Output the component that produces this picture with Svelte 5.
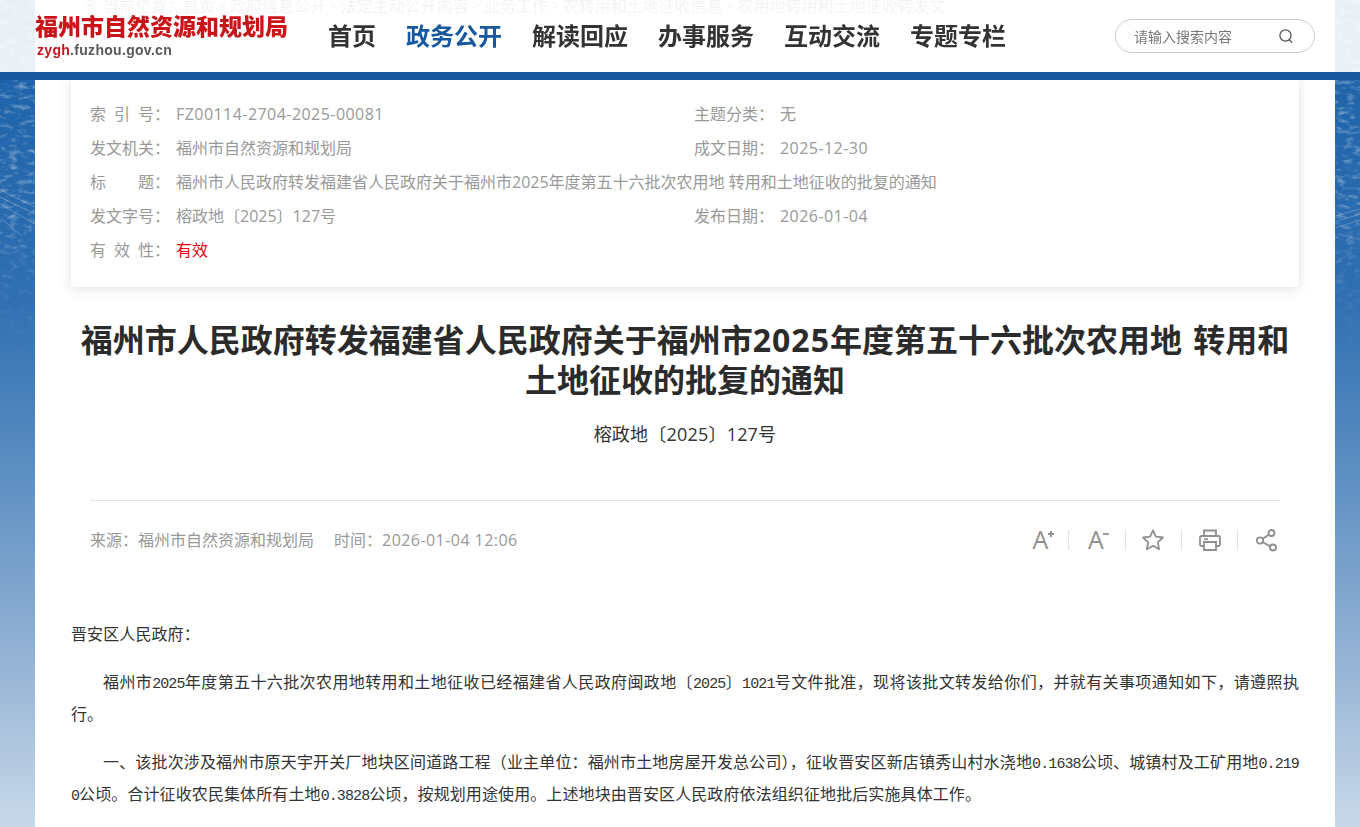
<script>
  const nav = ["首页", "政务公开", "解读回应", "办事服务", "互动交流", "专题专栏"];
  const crumbs = ["首页", "政府信息公开", "法定主动公开内容", "业务工作", "农转用和土地征收信息", "农用地转用和土地征收转发文"];
  const title = "福州市人民政府转发福建省人民政府关于福州市2025年度第五十六批次农用地 转用和土地征收的批复的通知";
</script>

<div class="root">
  <svg class="texture" width="1360" height="827" aria-hidden="true">
    <defs>
      <linearGradient id="fade" x1="0" y1="0" x2="0" y2="1">
        <stop offset="0" stop-color="#fff" stop-opacity="1" />
        <stop offset="0.24" stop-color="#fff" stop-opacity="0.9" />
        <stop offset="0.34" stop-color="#fff" stop-opacity="0.3" />
        <stop offset="0.44" stop-color="#fff" stop-opacity="0" />
      </linearGradient>
      <mask id="fademask">
        <rect width="1360" height="827" fill="url(#fade)" />
      </mask>
      <filter id="grain" x="0" y="0" width="100%" height="100%">
        <feTurbulence type="fractalNoise" baseFrequency="0.11 0.2" numOctaves="3" seed="11" />
        <feColorMatrix values="0 0 0 0 1  0 0 0 0 1  0 0 0 0 1  2.4 0 0 0 -1.18" />
      </filter>
    </defs>
    <g mask="url(#fademask)">
      <g opacity="0.42">
        <rect x="0" y="0" width="36" height="827" filter="url(#grain)" />
        <rect x="1334" y="0" width="26" height="827" filter="url(#grain)" />
      </g>
      <g class="lines">
        <path d="M0 190 L35 207 M0 197 L35 214 M0 204 L35 224 M3 220 L22 236" />
        <path d="M1335 228 L1360 220 M1335 222 L1360 214 M1335 216 L1360 209 M1338 234 L1360 240" />
      </g>
    </g>
  </svg>

  <header class="top">
    <div class="top-inner">
      <div class="logo">
        <div class="logo-cn">福州市自然资源和规划局</div>
        <div class="logo-en"><span>zygh</span>.fuzhou.gov.cn</div>
      </div>
      <nav>
        {#each nav as item, i}
          <a href="#top" class:active={i === 1}>{item}</a>
        {/each}
      </nav>
      <div class="search">
        <span>请输入搜索内容</span>
        <svg width="16" height="16" viewBox="0 0 16 16" fill="none" stroke="#555" stroke-width="1.3">
          <circle cx="7.5" cy="7.5" r="5.6" />
          <path d="M11.3 11.6 L13.6 14.2" stroke-linecap="round" />
        </svg>
      </div>
    </div>
  </header>

  <main class="page">
    <div class="crumbs">
      <svg width="14" height="14" viewBox="0 0 14 14" fill="none" stroke="#888" stroke-width="1.2">
        <circle cx="7" cy="6" r="4.5" />
        <circle cx="7" cy="6" r="1.4" />
      </svg>
      <span>当前位置：</span>
      {#each crumbs as c, i}
        {#if i > 0}<i>&gt;</i>{/if}<span>{c}</span>
      {/each}
    </div>

    <section class="card">
      <div class="row">
        <div class="cell"><span class="label">索引号</span><b>：</b><span class="num">FZ00114-2704-2025-00081</span></div>
        <div class="cell"><span class="label plain">主题分类</span><b>：</b><span>无</span></div>
      </div>
      <div class="row">
        <div class="cell"><span class="label">发文机关</span><b>：</b><span>福州市自然资源和规划局</span></div>
        <div class="cell"><span class="label plain">成文日期</span><b>：</b><span class="num">2025-12-30</span></div>
      </div>
      <div class="row">
        <div class="cell"><span class="label">标题</span><b>：</b><span>{title}</span></div>
      </div>
      <div class="row">
        <div class="cell"><span class="label">发文字号</span><b>：</b><span>榕政地〔2025〕127号</span></div>
        <div class="cell"><span class="label plain">发布日期</span><b>：</b><span class="num">2026-01-04</span></div>
      </div>
      <div class="row">
        <div class="cell"><span class="label">有效性</span><b>：</b><span class="red">有效</span></div>
      </div>
    </section>

    <h1>福州市人民政府转发福建省人民政府关于福州市<span class="yr">2025</span>年度第五十六批次农用地 转用和土地征收的批复的通知</h1>
    <p class="docno">榕政地〔2025〕127号</p>

    <div class="meta">
      <div class="meta-text">
        <span>来源：福州市自然资源和规划局</span>
        <span>时间：<span class="num">2026-01-04 12:06</span></span>
      </div>
      <div class="tools">
        <svg width="24" height="24" viewBox="0 0 24 24" fill="none">
          <text x="3.5" y="21" class="aa">A</text>
          <path d="M19 6 H25 M22 3 V9" />
        </svg>
        <i></i>
        <svg width="24" height="24" viewBox="0 0 24 24" fill="none">
          <text x="3" y="21" class="aa">A</text>
          <path d="M18 6 H24" />
        </svg>
        <i></i>
        <svg width="24" height="24" viewBox="0 0 24 24" fill="none">
          <path d="M12 2.4 L14.9 8.6 L21.9 9.5 L16.8 14.3 L18.1 21.2 L12 17.8 L5.9 21.2 L7.2 14.3 L2.1 9.5 L9.1 8.6 Z" stroke-linejoin="round" />
        </svg>
        <i></i>
        <svg width="24" height="24" viewBox="0 0 24 24" fill="none">
          <path d="M6 8 V2.5 H18 V8" />
          <path d="M6 18 H3.5 Q2 18 2 16.5 V9.5 Q2 8 3.5 8 H20.5 Q22 8 22 9.5 V16.5 Q22 18 20.5 18 H18" />
          <path d="M6 14 H18 V22 H6 Z" />
          <path d="M6 11.2 H10" />
        </svg>
        <i></i>
        <svg width="24" height="24" viewBox="0 0 24 24" fill="none">
          <circle cx="6" cy="12.5" r="3.2" />
          <circle cx="17.5" cy="5" r="3" />
          <circle cx="19" cy="19.5" r="3" />
          <path d="M8.8 10.8 L15 6.6 M8.8 14.2 L16.4 18.4" />
        </svg>
      </div>
    </div>

    <article>
      <p class="flush">晋安区人民政府：</p>
      <p>福州市<span class="n">2025</span>年度第五十六批次农用地转用和土地征收已经福建省人民政府闽政地〔<span class="n">2025</span>〕<span class="n">1021</span>号文件批准，现将该批文转发给你们，并就有关事项通知如下，请遵照执行。</p>
      <p>一、该批次涉及福州市原天宇开关厂地块区间道路工程（业主单位：福州市土地房屋开发总公司），征收晋安区新店镇秀山村水浇地<span class="n">0.1638</span>公顷、城镇村及工矿用地<span class="n">0.2190</span>公顷。合计征收农民集体所有土地<span class="n">0.3828</span>公顷，按规划用途使用。上述地块由晋安区人民政府依法组织征地批后实施具体工作。</p>
    </article>
  </main>
</div>

<style>
  :global(html),
  :global(body) {
    margin: 0;
    height: 827px;
    overflow: hidden;
  }

  .root {
    position: relative;
    height: 827px;
    overflow: hidden;
    font-family: "Open Sans", "Noto Sans CJK SC", sans-serif;
    background: linear-gradient(180deg, #1b60a8 0, #1f64aa 80px, #2f6fb2 300px, #5f90c3 480px, #95b3d5 660px, #c8d8e9 827px);
  }

  .texture {
    position: absolute;
    top: 0;
    left: 0;
  }

  .lines path {
    fill: none;
    stroke: #fff;
    stroke-opacity: 0.3;
    stroke-width: 1;
  }

  .top {
    position: absolute;
    z-index: 2;
    top: 0;
    left: 0;
    right: 0;
    height: 72px;
    background: rgba(255, 255, 255, 0.9);
    border-bottom: 8px solid #17589f;
  }

  .top-inner {
    display: flex;
    align-items: center;
    width: 1300px;
    height: 72px;
    margin-left: 35px;
  }

  .logo {
    width: 293px;
    margin-top: -2px;
  }

  .logo-cn {
    font-size: 23px;
    line-height: 26px;
    font-weight: 900;
    color: #c9141a;
    white-space: nowrap;
  }

  .logo-en {
    margin: 3px 0 0 2px;
    font-family: "Liberation Sans", sans-serif;
    font-size: 14px;
    line-height: 16px;
    font-weight: 700;
    letter-spacing: 0.3px;
    color: #595959;
  }

  .logo-en span {
    color: #c9141a;
  }

  nav {
    display: flex;
    gap: 30px;
  }

  nav a {
    font-size: 24px;
    line-height: 32px;
    font-weight: 700;
    color: #333;
    text-decoration: none;
  }

  nav a.active {
    color: #17589f;
  }

  .search {
    display: flex;
    align-items: center;
    justify-content: space-between;
    box-sizing: border-box;
    width: 200px;
    height: 34px;
    margin-left: auto;
    margin-right: 20px;
    padding: 0 20px 0 18px;
    border: 1px solid #ccc;
    border-radius: 17px;
    font-size: 14px;
    color: #777;
  }

  .page {
    position: relative;
    box-sizing: border-box;
    width: 1300px;
    margin: -4px 0 0 35px;
    padding: 0 36px;
    height: 900px;
    background: #fff;
  }

  .crumbs {
    display: flex;
    align-items: center;
    height: 20px;
    padding-left: 12px;
    font-size: 16px;
    line-height: 20px;
    color: #888;
    white-space: nowrap;
  }

  .crumbs svg {
    margin-right: 6px;
  }

  .crumbs i {
    margin: 0 4px;
    font-style: normal;
    font-size: 12px;
  }

  .card {
    margin-top: 61px;
    padding: 20px 20px 20px 19px;
    background: #fff;
    box-shadow: 0 2px 12px rgba(0, 0, 0, 0.12);
    font-size: 16px;
    color: #999;
  }

  .row {
    display: flex;
    height: 34px;
    line-height: 34px;
  }

  .cell {
    display: flex;
    flex: none;
    width: 604px;
    white-space: nowrap;
  }

  .cell b {
    flex: none;
    font-weight: 400;
    width: 22px;
  }

  .label {
    flex: none;
    width: 64px;
    text-align-last: justify;
  }

  .label.plain {
    text-align-last: left;
  }

  .num {
    letter-spacing: 0.45px;
  }

  .red {
    color: #e60012;
  }

  h1 {
    margin: 33px 0 0;
    font-size: 32px;
    line-height: 40px;
    font-weight: 700;
    word-spacing: 3px;
    color: #2b2b2b;
    text-align: center;
  }

  .yr {
    letter-spacing: 1px;
  }

  .docno {
    margin: 20px 0 0;
    font-size: 18px;
    line-height: 28px;
    letter-spacing: 0.2px;
    color: #333;
    text-align: center;
  }

  .meta {
    display: flex;
    align-items: center;
    justify-content: space-between;
    height: 76px;
    margin: 52px 19px 0;
    border-top: 1px solid #e5e5e5;
    font-size: 16px;
    color: #999;
  }

  .meta-text {
    display: flex;
    gap: 20px;
  }

  .tools {
    display: flex;
    align-items: center;
    padding-top: 1px;
    margin-right: 2px;
  }

  .tools svg {
    stroke: #8f8f8f;
    stroke-width: 1.8;
    overflow: visible;
  }

  .tools i {
    width: 1px;
    height: 20px;
    margin: 0 15.7px;
    background: #e3e3e3;
  }

  .aa {
    font-family: "Open Sans", sans-serif;
    font-size: 25px;
    font-weight: 400;
    fill: #8f8f8f;
    stroke: none;
  }

  article {
    margin-top: 41px;
    font-size: 16px;
    line-height: 32px;
    letter-spacing: 0.1px;
    color: #333;
    word-break: break-all;
    text-align: justify;
  }

  article p {
    margin: 0 0 16px;
    text-indent: 32px;
  }

  article p.flush {
    text-indent: 0;
  }

  .n {
    font-family: "Liberation Mono", monospace;
    font-size: 15px;
    letter-spacing: -0.9px;
    line-height: 1;
  }
</style>
